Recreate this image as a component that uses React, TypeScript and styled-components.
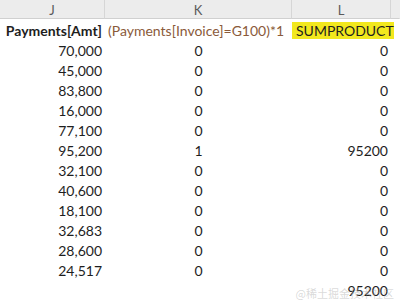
import { Fragment } from 'react';
import styled, { createGlobalStyle } from 'styled-components';

const GlobalStyle = createGlobalStyle`
  html, body {
    margin: 0;
    padding: 0;
    background: #ffffff;
  }
  body {
    font-family: Lato, "Liberation Sans", sans-serif;
  }
`;

const Sheet = styled.div`
  position: relative;
  width: 400px;
  height: 303px;
  overflow: hidden;
  background: #ffffff;
`;

const Grid = styled.div`
  display: grid;
  grid-template-columns: 105px 187px 99px 9px;
`;

const ColHead = styled.div<{ $last?: boolean }>`
  height: 19px;
  background: #ececec;
  border-right: 1px solid ${(p) => (p.$last ? 'transparent' : '#d6d6d6')};
  border-bottom: 1px solid #d0d0d0;
  display: flex;
  align-items: center;
  justify-content: center;
  font-size: 13px;
  color: #5a5a5a;
  box-sizing: border-box;
  padding-top: 1px;
`;

const Cell = styled.div<{ $align?: 'left' | 'right' | 'center'; $bold?: boolean; $tone?: string }>`
  height: 20px;
  display: flex;
  align-items: center;
  justify-content: ${(p) =>
    p.$align === 'left' ? 'flex-start' : p.$align === 'center' ? 'center' : 'flex-end'};
  padding: 0 3px 0 3px;
  font-size: 14px;
  font-weight: ${(p) => (p.$bold ? 700 : 400)};
  color: ${(p) => p.$tone || '#1e1e1e'};
  white-space: nowrap;
  box-sizing: border-box;
`;

const FirstRowGap = styled.div`
  grid-column: 1 / -1;
  height: 1px;
`;

const Highlight = styled.div`
  height: 20px;
  display: flex;
  align-items: center;
  box-sizing: border-box;
  padding: 2px 0 1px 0;
`;

const HighlightFill = styled.span`
  flex: 1;
  height: 100%;
  background: #f2e81e;
  display: flex;
  align-items: center;
  padding-left: 4px;
  font-size: 14px;
  color: #1e1e1e;
  white-space: nowrap;
`;

const Watermark = styled.div`
  position: absolute;
  right: 6px;
  bottom: 2px;
  font-family: "Noto Sans CJK SC", sans-serif;
  font-size: 11px;
  color: rgba(160, 160, 160, 0.4);
  pointer-events: none;
`;

const amounts = [
  '70,000', '45,000', '83,800', '16,000', '77,100', '95,200',
  '32,100', '40,600', '18,100', '32,683', '28,600', '24,517',
];
const flags = [0, 0, 0, 0, 0, 1, 0, 0, 0, 0, 0, 0];

export default function App() {
  return (
    <Sheet>
      <GlobalStyle />
      <Grid>
        <ColHead>J</ColHead>
        <ColHead>K</ColHead>
        <ColHead>L</ColHead>
        <ColHead $last />
        <FirstRowGap />

        <Cell $bold>Payments[Amt]</Cell>
        <Cell $align="left" $tone="#8a5a3a">(Payments[Invoice]=G100)*1</Cell>
        <Highlight>
          <HighlightFill>SUMPRODUCT</HighlightFill>
        </Highlight>
        <Cell />

        {amounts.map((amt, i) => (
          <Fragment key={amt + i}>
            <Cell>{amt}</Cell>
            <Cell $align="center">{flags[i]}</Cell>
            <Cell>{flags[i] ? 95200 : 0}</Cell>
            <Cell />
          </Fragment>
        ))}

        <Cell />
        <Cell />
        <Cell>95200</Cell>
        <Cell />
      </Grid>
      <Watermark>@稀土掘金技术社区</Watermark>
    </Sheet>
  );
}
